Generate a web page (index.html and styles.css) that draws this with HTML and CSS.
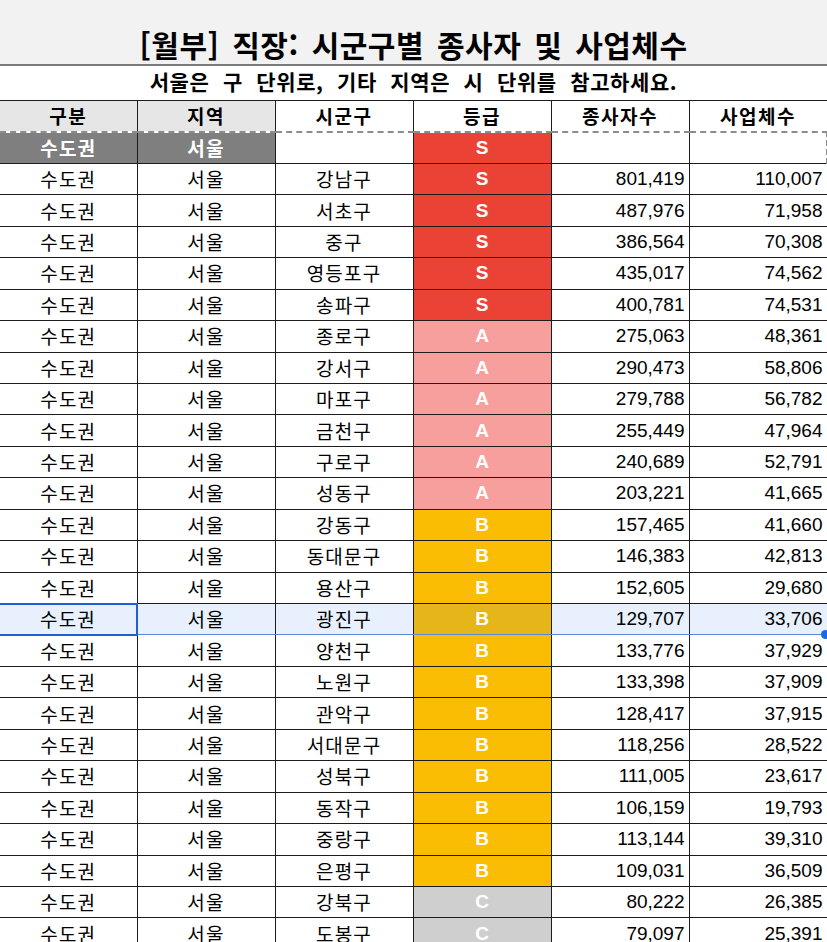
FILE: index.html
```html
<!DOCTYPE html>
<html lang="ko">
<head>
<meta charset="utf-8">
<title>[월부] 직장: 시군구별 종사자 및 사업체수</title>
<link rel="stylesheet" href="styles.css">
</head>
<body>
<div class="sheet">
  <div class="title">[월부] 직장: 시군구별 종사자 및 사업체수</div>
  <div class="subtitle">서울은 구 단위로, 기타 지역은 시 단위를 참고하세요.</div>
  <table class="grid">
    <colgroup>
      <col class="c1"><col class="c2"><col class="c3"><col class="c4"><col class="c5"><col class="c6">
    </colgroup>
    <thead>
      <tr>
        <th class="hgray">구분</th>
        <th class="hgray">지역</th>
        <th>시군구</th>
        <th>등급</th>
        <th>종사자수</th>
        <th>사업체수</th>
      </tr>
    </thead>
    <tbody>
      <tr class="filter">
        <td class="dark">수도권</td>
        <td class="dark">서울</td>
        <td></td>
        <td class="grade s">S</td>
        <td></td>
        <td class="last"></td>
      </tr>
      <tr><td>수도권</td><td>서울</td><td>강남구</td><td class="grade s">S</td><td class="num">801,419</td><td class="num">110,007</td></tr>
      <tr><td>수도권</td><td>서울</td><td>서초구</td><td class="grade s">S</td><td class="num">487,976</td><td class="num">71,958</td></tr>
      <tr><td>수도권</td><td>서울</td><td>중구</td><td class="grade s">S</td><td class="num">386,564</td><td class="num">70,308</td></tr>
      <tr><td>수도권</td><td>서울</td><td>영등포구</td><td class="grade s">S</td><td class="num">435,017</td><td class="num">74,562</td></tr>
      <tr><td>수도권</td><td>서울</td><td>송파구</td><td class="grade s">S</td><td class="num">400,781</td><td class="num">74,531</td></tr>
      <tr><td>수도권</td><td>서울</td><td>종로구</td><td class="grade a">A</td><td class="num">275,063</td><td class="num">48,361</td></tr>
      <tr><td>수도권</td><td>서울</td><td>강서구</td><td class="grade a">A</td><td class="num">290,473</td><td class="num">58,806</td></tr>
      <tr><td>수도권</td><td>서울</td><td>마포구</td><td class="grade a">A</td><td class="num">279,788</td><td class="num">56,782</td></tr>
      <tr><td>수도권</td><td>서울</td><td>금천구</td><td class="grade a">A</td><td class="num">255,449</td><td class="num">47,964</td></tr>
      <tr><td>수도권</td><td>서울</td><td>구로구</td><td class="grade a">A</td><td class="num">240,689</td><td class="num">52,791</td></tr>
      <tr><td>수도권</td><td>서울</td><td>성동구</td><td class="grade a">A</td><td class="num">203,221</td><td class="num">41,665</td></tr>
      <tr><td>수도권</td><td>서울</td><td>강동구</td><td class="grade b">B</td><td class="num">157,465</td><td class="num">41,660</td></tr>
      <tr><td>수도권</td><td>서울</td><td>동대문구</td><td class="grade b">B</td><td class="num">146,383</td><td class="num">42,813</td></tr>
      <tr><td>수도권</td><td>서울</td><td>용산구</td><td class="grade b">B</td><td class="num">152,605</td><td class="num">29,680</td></tr>
      <tr class="selected"><td class="active">수도권</td><td>서울</td><td>광진구</td><td class="grade b">B</td><td class="num">129,707</td><td class="num">33,706</td></tr>
      <tr><td>수도권</td><td>서울</td><td>양천구</td><td class="grade b">B</td><td class="num">133,776</td><td class="num">37,929</td></tr>
      <tr><td>수도권</td><td>서울</td><td>노원구</td><td class="grade b">B</td><td class="num">133,398</td><td class="num">37,909</td></tr>
      <tr><td>수도권</td><td>서울</td><td>관악구</td><td class="grade b">B</td><td class="num">128,417</td><td class="num">37,915</td></tr>
      <tr><td>수도권</td><td>서울</td><td>서대문구</td><td class="grade b">B</td><td class="num">118,256</td><td class="num">28,522</td></tr>
      <tr><td>수도권</td><td>서울</td><td>성북구</td><td class="grade b">B</td><td class="num">111,005</td><td class="num">23,617</td></tr>
      <tr><td>수도권</td><td>서울</td><td>동작구</td><td class="grade b">B</td><td class="num">106,159</td><td class="num">19,793</td></tr>
      <tr><td>수도권</td><td>서울</td><td>중랑구</td><td class="grade b">B</td><td class="num">113,144</td><td class="num">39,310</td></tr>
      <tr><td>수도권</td><td>서울</td><td>은평구</td><td class="grade b">B</td><td class="num">109,031</td><td class="num">36,509</td></tr>
      <tr><td>수도권</td><td>서울</td><td>강북구</td><td class="grade c">C</td><td class="num">80,222</td><td class="num">26,385</td></tr>
      <tr><td>수도권</td><td>서울</td><td>도봉구</td><td class="grade c">C</td><td class="num">79,097</td><td class="num">25,391</td></tr>
    </tbody>
  </table>
  <div class="fill-handle"></div>
</div>
</body>
</html>
```

FILE: styles.css
```css
html, body {
  margin: 0;
  padding: 0;
  overflow: hidden;
  background: #ffffff;
}

.sheet {
  position: relative;
  width: 827px;
  font-family: "Noto Sans CJK KR", "Liberation Sans", sans-serif;
  color: #000;
}

.title {
  height: 66px;
  box-sizing: border-box;
  padding-top: 25px;
  background: #f2f2f2;
  border-bottom: 2px solid #7a7a7a;
  text-align: center;
  font-size: 30px;
  font-weight: 700;
  line-height: 38px;
  letter-spacing: 0.5px;
  word-spacing: 4px;
}

.subtitle {
  height: 34px;
  box-sizing: border-box;
  text-align: center;
  font-size: 21px;
  font-weight: 700;
  line-height: 30px;
  letter-spacing: 0.6px;
  word-spacing: 7px;
}

.grid {
  width: 827px;
  table-layout: fixed;
  border-collapse: collapse;
  font-size: 19px;
}

.c1 { width: 137px; }
.c2, .c3, .c4, .c5, .c6 { width: 138px; }

.grid tr {
  height: 31.45px;
}

.grid th,
.grid td {
  padding: 0 4px;
  border: 1px solid #1c1c1c;
  text-align: center;
  white-space: nowrap;
  overflow: hidden;
  line-height: 20px;
  letter-spacing: 1.2px;
}

.grid tr > :first-child {
  border-left: none;
}

.grid th {
  font-weight: 700;
  background: #ffffff;
  letter-spacing: 1.5px;
}

.grid th.hgray {
  background: #e6e6e6;
}

.filter td {
  border-top: 2px dashed #8c8c8c;
}

.filter td.last {
  border-right: 2px dashed #8c8c8c;
}

.filter td.dark {
  background: #7f7f7f;
  color: #ffffff;
  font-weight: 700;
}

.grid td.num {
  text-align: right;
  font-family: "Liberation Sans", sans-serif;
  font-size: 19px;
  letter-spacing: 0;
  padding-right: 4px;
}

.grid td.grade {
  color: #ffffff;
  font-family: "Liberation Sans", sans-serif;
  font-weight: 700;
  font-size: 19px;
  letter-spacing: 0;
}

.grade.s { background: #ea4335; }
.grade.a { background: #f79f9c; }
.grade.b { background: #fbbc04; }
.grade.c { background: #cfcfcf; }

.selected td {
  background: #e8f0fe;
  border-top: 1px solid #5b87d6;
  border-bottom: 1px solid #5b87d6;
}

.selected td.grade.b {
  background: #e5b519;
}

.selected td.active {
  border: 2px solid #1f5fcf;
  border-left: none;
}

.fill-handle {
  position: absolute;
  left: 821px;
  top: 630px;
  width: 9px;
  height: 9px;
  border-radius: 50%;
  background: #1a6ae0;
}
```
